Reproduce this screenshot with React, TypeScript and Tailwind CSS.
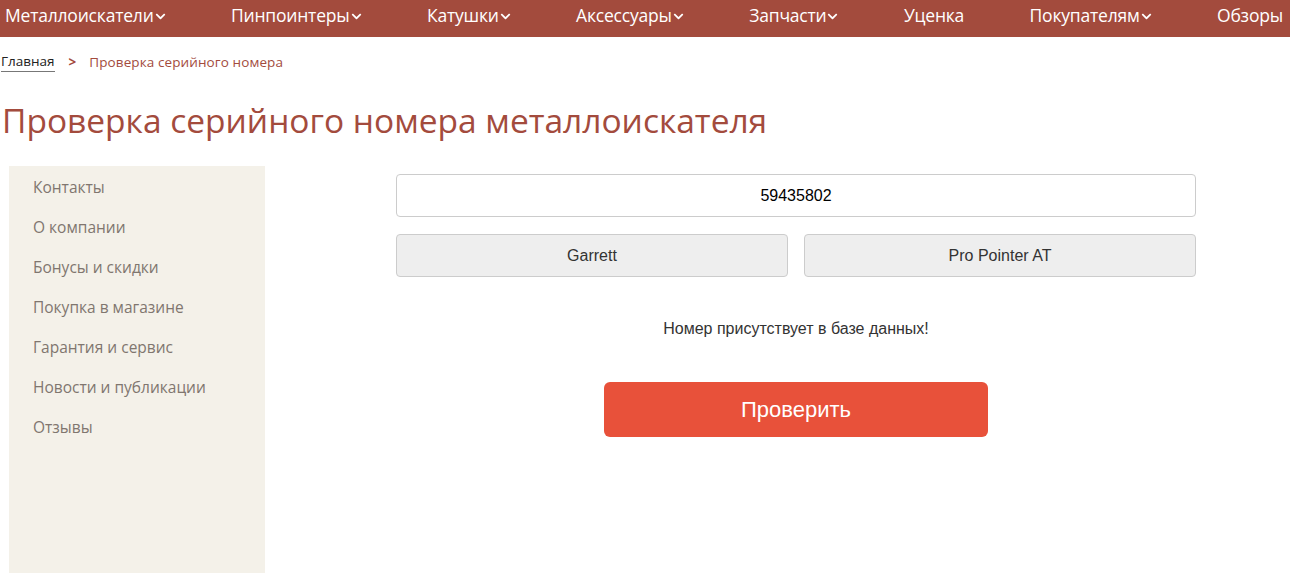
import { FaChevronDown } from 'react-icons/fa'

const nav = [
    { name: 'Металлоискатели', drop: true },
    { name: 'Пинпоинтеры', drop: true },
    { name: 'Катушки', drop: true },
    { name: 'Аксессуары', drop: true },
    { name: 'Запчасти', drop: true },
    { name: 'Уценка', drop: false },
    { name: 'Покупателям', drop: true },
    { name: 'Обзоры', drop: false },
]

const menu = ['Контакты', 'О компании', 'Бонусы и скидки', 'Покупка в магазине', 'Гарантия и сервис', 'Новости и публикации', 'Отзывы']

export default function App() {
    return (
        <div className="min-h-[573px] bg-white font-['Open_Sans',sans-serif]">
            <nav className="h-[37px] bg-[#a34b3d] flex items-center justify-between pl-[5px] pr-[7px] pb-[6px]">
                {nav.map(({ name, drop }) => (
                    <a key={name} href="#" className="flex items-center text-white text-[17.5px] tracking-[-0.2px]">
                        {name}
                        {drop && <FaChevronDown className="w-[11px] h-[11px] ml-[1px] mt-[2px]" />}
                    </a>
                ))}
            </nav>

            <div className="pt-[15px] px-[1px] flex items-center text-[13.5px]">
                <a href="#" className="text-[#222] border-b border-[#777] leading-[19px]">Главная</a>
                <span className="text-[#a34b3d] font-bold ml-[14px] mr-[13px]">&gt;</span>
                <span className="text-[#a34b3d] tracking-[0.1px]">Проверка серийного номера</span>
            </div>

            <h1 className="mt-[25px] ml-[2px] text-[33.5px] leading-[46px] text-[#a34b3d]">
                Проверка серийного номера металлоискателя
            </h1>

            <div className="mt-[23px] flex items-start">
                <aside className="ml-[9px] w-[256px] h-[407px] bg-[#f4f1e9] pt-[1px]">
                    <ul>
                        {menu.map((item) => (
                            <li key={item} className="h-[40px] flex items-center pl-[24px] text-[15.5px] text-[#80766f]">
                                {item}
                            </li>
                        ))}
                    </ul>
                </aside>

                <div className="ml-[131px] w-[800px] pt-[8px] font-['Liberation_Sans',Arial,sans-serif]">
                    <input
                        readOnly
                        value="59435802"
                        className="w-full h-[43px] border border-[#ccc] rounded-[4px] text-center text-[16px] text-black outline-none"
                    />
                    <div className="mt-[17px] grid grid-cols-2 gap-[16px]">
                        <button className="h-[43px] bg-[#eee] border border-[#ccc] rounded-[4px] text-[16px] text-[#333]">Garrett</button>
                        <button className="h-[43px] bg-[#eee] border border-[#ccc] rounded-[4px] text-[16px] text-[#333]">Pro Pointer AT</button>
                    </div>
                    <p className="mt-[41px] text-center text-[16px] leading-[22px] text-[#333]">Номер присутствует в базе данных!</p>
                    <div className="mt-[42px] flex justify-center">
                        <button className="w-[384px] h-[55px] bg-[#e8513a] rounded-[6px] text-white text-[22px]">Проверить</button>
                    </div>
                </div>
            </div>
        </div>
    )
}
